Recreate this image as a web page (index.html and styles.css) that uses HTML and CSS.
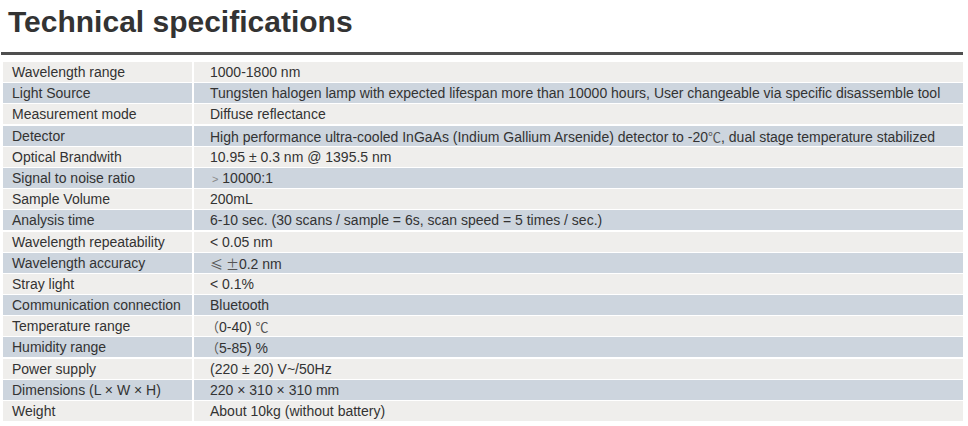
FILE: index.html
```html
<!DOCTYPE html>
<html>
<head>
<meta charset="utf-8">
<link rel="stylesheet" href="styles.css">
</head>
<body>
<div class="page">
  <h1 class="title">Technical specifications</h1>
  <div class="rule"></div>
  <div class="specs">
    <div class="row odd"><div class="k">Wavelength range</div><div class="v">1000-1800 nm</div></div>
    <div class="row even"><div class="k">Light Source</div><div class="v">Tungsten halogen lamp with expected lifespan more than 10000 hours, User changeable via specific disassemble tool</div></div>
    <div class="row odd"><div class="k">Measurement mode</div><div class="v">Diffuse reflectance</div></div>
    <div class="row even"><div class="k">Detector</div><div class="v">High performance ultra-cooled InGaAs (Indium Gallium Arsenide) detector to -20<span class="cjk">℃</span>, dual stage temperature stabilized</div></div>
    <div class="row odd"><div class="k">Optical Brandwith</div><div class="v">10.95 ± 0.3 nm @ 1395.5 nm</div></div>
    <div class="row even"><div class="k">Signal to noise ratio</div><div class="v"><span class="cjk gt">&gt;</span> 10000:1</div></div>
    <div class="row odd"><div class="k">Sample Volume</div><div class="v">200mL</div></div>
    <div class="row even"><div class="k">Analysis time</div><div class="v">6-10 sec. (30 scans / sample = 6s, scan speed = 5 times / sec.)</div></div>
    <div class="row odd"><div class="k">Wavelength repeatability</div><div class="v">&lt; 0.05 nm</div></div>
    <div class="row even"><div class="k">Wavelength accuracy</div><div class="v"><span class="cjk">≤ ±</span>0.2 nm</div></div>
    <div class="row odd"><div class="k">Stray light</div><div class="v">&lt; 0.1%</div></div>
    <div class="row even"><div class="k">Communication connection</div><div class="v">Bluetooth</div></div>
    <div class="row odd"><div class="k">Temperature range</div><div class="v"><span class="cjk paren">（</span>0-40) <span class="cjk">℃</span></div></div>
    <div class="row even"><div class="k">Humidity range</div><div class="v"><span class="cjk paren">（</span>5-85) %</div></div>
    <div class="row odd"><div class="k">Power supply</div><div class="v">(220 ± 20) V~/50Hz</div></div>
    <div class="row even"><div class="k">Dimensions (L × W × H)</div><div class="v">220 × 310 × 310 mm</div></div>
    <div class="row odd"><div class="k">Weight</div><div class="v">About 10kg (without battery)</div></div>
  </div>
</div>
</body>
</html>
```
FILE: styles.css
```css
html, body {
  margin: 0;
  padding: 0;
  background: #ffffff;
}
body {
  font-family: "Liberation Sans", Arial, sans-serif;
  color: #333333;
}
.page {
  width: 968px;
}
.title {
  margin: 0;
  padding: 4px 0 0 8px;
  height: 46px;
  box-sizing: border-box;
  font-size: 30px;
  font-weight: bold;
  line-height: 36px;
  color: #333333;
}
.rule {
  margin: 6px 5px 0 1px;
  height: 3px;
  background: #4f4f4f;
}
.specs {
  margin: 7px 5px 0 3px;
  display: flex;
  flex-direction: column;
  gap: 1.2px;
}
.row {
  display: grid;
  grid-template-columns: 189px 1fr;
  column-gap: 2px;
  height: 20px;
  font-size: 14px;
  line-height: 21px;
}
.row .k {
  padding-left: 9px;
  white-space: nowrap;
  overflow: hidden;
}
.row .v {
  padding-left: 16px;
  white-space: nowrap;
  overflow: hidden;
}
.odd .k, .odd .v {
  background: #efeeec;
}
.even .k, .even .v {
  background: #cdd5de;
}
.cjk {
  font-family: "Noto Sans CJK SC", sans-serif;
  color: #555;
  font-size: 13px;
}
.gt {
  font-family: "Liberation Sans", sans-serif;
  color: #888;
  font-size: 11px;
  padding-left: 2px;
}
.paren {
  margin-left: -4px;
}
```
